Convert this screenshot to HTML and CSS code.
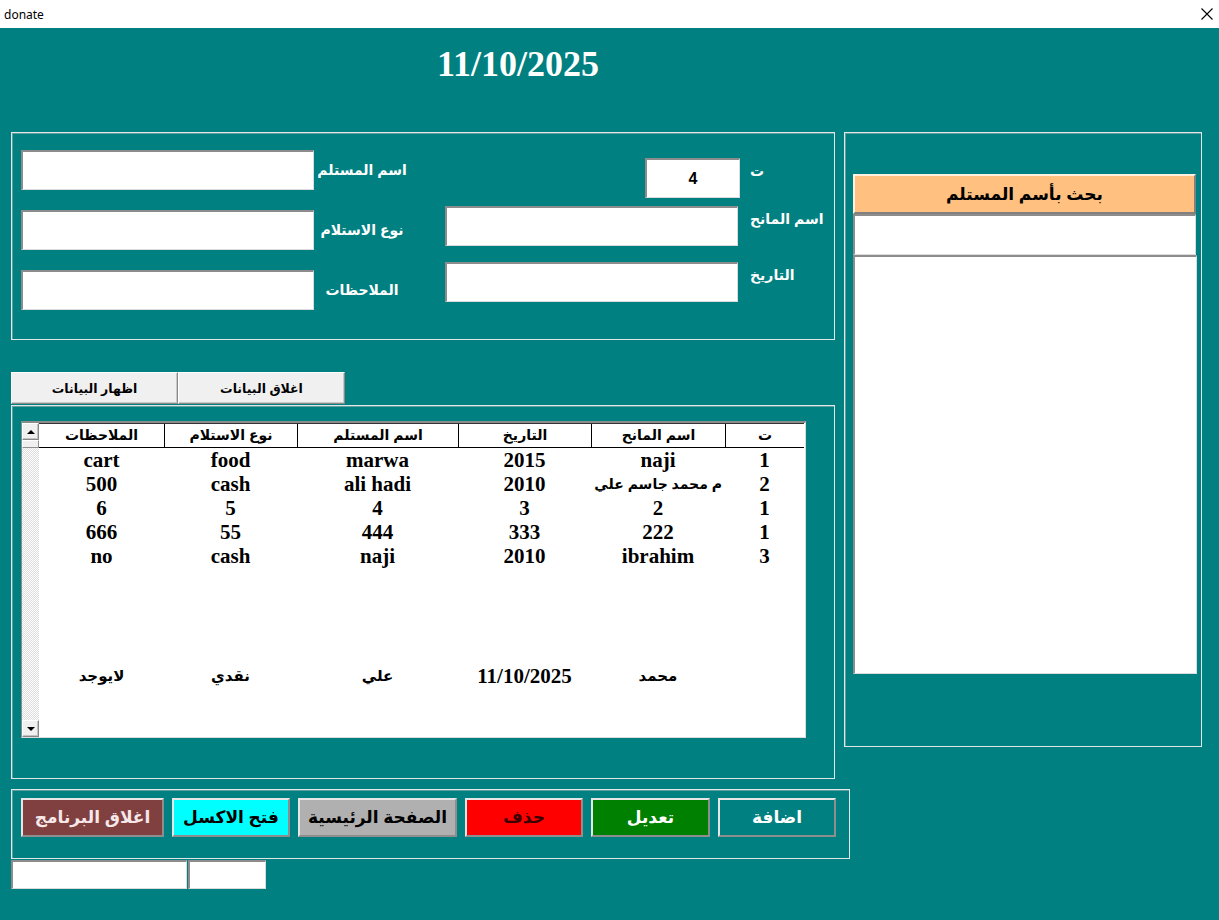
FILE: index.html
```html
<!DOCTYPE html>
<html lang="ar">
<head>
<meta charset="utf-8">
<title>donate</title>
<link rel="stylesheet" href="styles.css">
</head>
<body>
<div class="titlebar">
  <span class="app-name">donate</span>
  <svg class="close" viewBox="0 0 12 12" width="12" height="12"><path d="M0.5 0.5 L11.5 11.5 M11.5 0.5 L0.5 11.5" stroke="#000" stroke-width="1.1" fill="none"/></svg>
</div>

<div class="date-row"><h1 class="date">11/10/2025</h1></div>

<div class="layout">
  <div class="left">
    <section class="frame entry">
      <div class="col col-a">
        <div class="field-a"><input class="textbox w-long" type="text"><label class="lbl lbl-a">اسم المستلم</label></div>
        <div class="field-a"><input class="textbox w-long" type="text"><label class="lbl lbl-a">نوع الاستلام</label></div>
        <div class="field-a"><input class="textbox w-long" type="text"><label class="lbl lbl-a">الملاحظات</label></div>
      </div>
      <div class="col col-b">
        <div class="field-b"><input class="textbox w-short" type="text" value="4"><label class="lbl lbl-b gap-10">ت</label></div>
        <div class="field-b row2"><input class="textbox w-long" type="text"><label class="lbl lbl-b gap-12">اسم المانح</label></div>
        <div class="field-b row3"><input class="textbox w-long" type="text"><label class="lbl lbl-b gap-12">التاريخ</label></div>
      </div>
    </section>

    <div class="tabs">
      <div class="tab">اظهار البيانات</div>
      <div class="tab">اغلاق البيانات</div>
    </div>

    <section class="frame page">
      <div class="listbox">
        <div class="scrollbar">
          <div class="sb-btn"><span class="tri-up"></span></div>
          <div class="sb-thumb"></div>
          <div class="sb-track"></div>
          <div class="sb-btn"><span class="tri-down"></span></div>
        </div>
        <div class="grid" dir="rtl">
          <div class="row head">
            <div class="cell">ت</div><div class="cell">اسم المانح</div><div class="cell">التاريخ</div><div class="cell">اسم المستلم</div><div class="cell">نوع الاستلام</div><div class="cell">الملاحظات</div>
          </div>
          <div class="row">
            <div class="cell">1</div><div class="cell">naji</div><div class="cell">2015</div><div class="cell">marwa</div><div class="cell">food</div><div class="cell">cart</div>
          </div>
          <div class="row">
            <div class="cell">2</div><div class="cell ar start">م محمد جاسم علي</div><div class="cell">2010</div><div class="cell">ali hadi</div><div class="cell">cash</div><div class="cell">500</div>
          </div>
          <div class="row">
            <div class="cell">1</div><div class="cell">2</div><div class="cell">3</div><div class="cell">4</div><div class="cell">5</div><div class="cell">6</div>
          </div>
          <div class="row">
            <div class="cell">1</div><div class="cell">222</div><div class="cell">333</div><div class="cell">444</div><div class="cell">55</div><div class="cell">666</div>
          </div>
          <div class="row">
            <div class="cell">3</div><div class="cell">ibrahim</div><div class="cell">2010</div><div class="cell">naji</div><div class="cell">cash</div><div class="cell">no</div>
          </div>
          <div class="row"><div class="cell"></div><div class="cell"></div><div class="cell"></div><div class="cell"></div><div class="cell"></div><div class="cell"></div></div>
          <div class="row"><div class="cell"></div><div class="cell"></div><div class="cell"></div><div class="cell"></div><div class="cell"></div><div class="cell"></div></div>
          <div class="row"><div class="cell"></div><div class="cell"></div><div class="cell"></div><div class="cell"></div><div class="cell"></div><div class="cell"></div></div>
          <div class="row"><div class="cell"></div><div class="cell"></div><div class="cell"></div><div class="cell"></div><div class="cell"></div><div class="cell"></div></div>
          <div class="row">
            <div class="cell"></div><div class="cell ar">محمد</div><div class="cell">11/10/2025</div><div class="cell ar">علي</div><div class="cell ar">نقدي</div><div class="cell ar">لايوجد</div>
          </div>
        </div>
      </div>
    </section>

    <section class="frame actions">
      <button class="btn b-exit">اغلاق البرنامج</button>
      <button class="btn b-excel">فتح الاكسل</button>
      <button class="btn b-home">الصفحة الرئيسية</button>
      <button class="btn b-del">حذف</button>
      <button class="btn b-edit">تعديل</button>
      <button class="btn b-add">اضافة</button>
    </section>

    <div class="status">
      <input class="textbox st-1" type="text">
      <input class="textbox st-2" type="text">
    </div>
  </div>

  <aside class="frame search">
    <button class="search-btn">بحث بأسم المستلم</button>
    <input class="textbox search-box" type="text">
    <div class="results"></div>
  </aside>
</div>
</body>
</html>
```

FILE: styles.css
```css
* { box-sizing: border-box; }
html, body { margin: 0; padding: 0; }
body {
  width: 1219px;
  height: 920px;
  overflow: hidden;
  background: #008080;
  font-family: "Liberation Sans", "DejaVu Sans", sans-serif;
}

.titlebar {
  height: 28px;
  background: #fff;
  display: flex;
  align-items: center;
  justify-content: space-between;
  padding: 0 5px 0 4px;
}
.app-name {
  font-family: "Noto Sans", "Open Sans", sans-serif;
  font-size: 12px;
  color: #000;
}
.close { display: block; margin-right: 1px; }

.date-row { height: 104px; padding: 16px 0 0 437px; }
.date {
  margin: 0;
  font: bold 36px/40px "Liberation Serif", serif;
  color: #fff;
}

.layout { display: flex; align-items: flex-start; }
.left { width: 824px; margin-left: 11px; display: flex; flex-direction: column; }

.frame {
  border: 1px solid #dfe7e7;
  box-shadow: inset 1px 1px 0 #5f9f9f;
}

.textbox {
  display: block;
  height: 40px;
  margin: 0;
  padding: 0;
  background: #fff;
  border-style: solid;
  border-width: 2px 1px 1px 2px;
  border-color: #8c8c8c #dcdcdc #dcdcdc #8c8c8c;
  font: bold 16px "Liberation Sans", "DejaVu Sans", sans-serif;
  color: #000;
  text-align: center;
  outline: none;
}
.w-long { width: 293px; }
.w-short { width: 95px; }

.lbl {
  color: #fff;
  font: bold 14px/20px "Liberation Sans", "DejaVu Sans", sans-serif;
  white-space: nowrap;
}

/* entry frame */
.entry {
  height: 208px;
  display: flex;
  align-items: flex-start;
  padding: 17px 0 0 9px;
}
.col { display: flex; flex-direction: column; }
.col-a { gap: 20px; }
.field-a { display: flex; align-items: center; }
.lbl-a { width: 96px; text-align: center; }

.col-b { margin-left: 35px; margin-top: 8px; width: 378px; }
.field-b { display: flex; justify-content: flex-end; align-items: flex-start; }
.row2 { margin-top: 8px; }
.row3 { margin-top: 16px; }
.lbl-b { width: 73px; padding-top: 3px; text-align: left; }
.gap-10 { margin-left: 10px; }
.gap-12 { margin-left: 12px; }

/* tabs */
.tabs { display: flex; margin-top: 32px; height: 32px; }
.tab {
  width: 167px;
  height: 32px;
  background: #f0f0f0;
  border: 1px solid;
  border-color: #ffffff #8a8a8a #8a8a8a #ffffff;
  box-shadow: inset -1px -1px 0 #c8c8c8;
  display: flex;
  align-items: center;
  justify-content: center;
  font: bold 12.5px "Liberation Sans", "DejaVu Sans", sans-serif;
  color: #000;
}

/* data page */
.page { margin-top: 1px; height: 374px; padding: 15px 0 0 9px; }
.listbox {
  width: 785px;
  height: 317px;
  background: #fff;
  border-style: solid;
  border-width: 2px 1px 1px 1px;
  border-color: #8c8c8c #dcdcdc #dcdcdc #8c8c8c;
  display: flex;
  overflow: hidden;
}
.scrollbar {
  width: 17px;
  display: flex;
  flex-direction: column;
  flex: none;
}
.sb-btn {
  height: 17px;
  background: #f0f0f0;
  border: 1px solid;
  border-color: #ffffff #888888 #888888 #ffffff;
  box-shadow: inset -1px -1px 0 #c4c4c4;
  display: flex;
  align-items: center;
  justify-content: center;
  flex: none;
}
.tri-up, .tri-down { width: 0; height: 0; border-left: 4px solid transparent; border-right: 4px solid transparent; }
.tri-up { border-bottom: 4px solid #000; }
.tri-down { border-top: 4px solid #000; }
.sb-thumb {
  height: 8px;
  background: #f0f0f0;
  border: 1px solid;
  border-color: #ffffff #909090 #909090 #ffffff;
  flex: none;
}
.sb-track {
  flex: 1;
  background: repeating-conic-gradient(#dcdcdc 0 25%, #ffffff 0 50%) 0 0 / 2px 2px;
}

.grid { width: 765px; flex: none; }
.row {
  display: grid;
  grid-template-columns: 79px 134px 133px 161px 133px 125px;
  height: 24px;
}
.cell {
  font: bold 21px/24px "Liberation Serif", "DejaVu Sans", serif;
  color: #000;
  text-align: center;
  white-space: nowrap;
  overflow: hidden;
}
.cell.ar { font: bold 15px/24px "Liberation Sans", "DejaVu Sans", sans-serif; }
.cell.start { text-align: start; padding-right: 3px; font-size: 14px; }
.head {
  height: 25px;
  border-top: 1px solid #333;
  border-bottom: 1px solid #000;
}
.head .cell {
  font: bold 14px/23px "Liberation Sans", "DejaVu Sans", sans-serif;
  border-left: 1px solid #000;
}
.head .cell:last-child { border-left: none; }

/* action buttons */
.actions {
  margin-top: 10px;
  width: 839px;
  height: 70px;
  display: flex;
  gap: 8px;
  padding: 8px 0 0 9px;
}
.btn {
  height: 39px;
  margin: 0;
  padding: 0;
  border: 2px solid;
  border-color: #e6e6e6 #8e8e8e #8e8e8e #e6e6e6;
  font: bold 17px "Liberation Sans", "DejaVu Sans", sans-serif;
  cursor: default;
}
.b-exit { width: 143px; background: #804040; color: #f6e8e8; }
.b-excel { width: 118px; background: #00ffff; color: #000; }
.b-home { width: 159px; background: #b0b0b0; color: #000; }
.b-del { width: 118px; background: #ff0000; color: #3a0000; }
.b-edit { width: 119px; background: #008000; color: #fff; }
.b-add { width: 118px; background: #008080; color: #fff; }

.status { display: flex; margin-top: 1px; gap: 1px; }
.st-1 { width: 176px; height: 29px; }
.st-2 { width: 78px; height: 29px; }

/* search frame */
.search {
  margin-left: 9px;
  width: 358px;
  height: 615px;
  padding: 41px 0 0 8px;
  display: flex;
  flex-direction: column;
}
.search-btn {
  width: 343px;
  height: 40px;
  margin: 0;
  padding: 0;
  background: #ffc080;
  border: 2px solid;
  border-color: #fff0e0 #808080 #808080 #fff0e0;
  font: bold 17px "Liberation Sans", "DejaVu Sans", sans-serif;
  color: #000;
}
.search-box { width: 343px; height: 41px; }
.results {
  width: 344px;
  height: 419px;
  background: #fff;
  border-style: solid;
  border-width: 2px 1px 1px 2px;
  border-color: #8c8c8c #dcdcdc #dcdcdc #8c8c8c;
}
```
